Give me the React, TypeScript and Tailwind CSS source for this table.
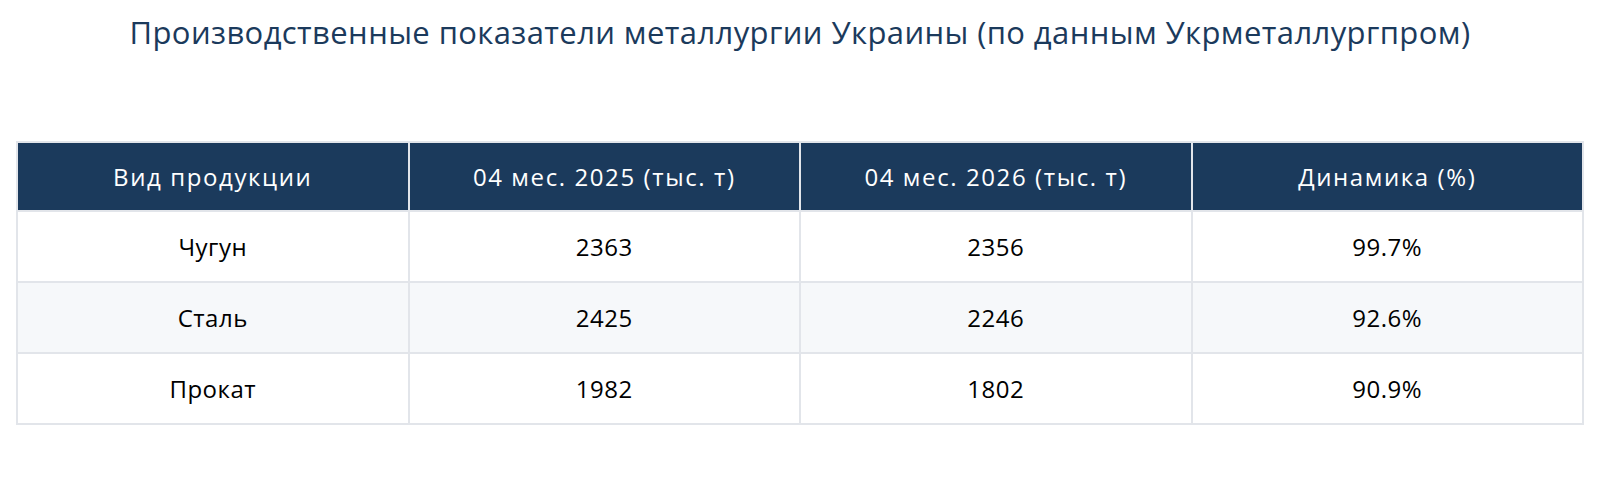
const rows = [
  { name: "Чугун", y2025: "2363", y2026: "2356", dyn: "99.7%" },
  { name: "Сталь", y2025: "2425", y2026: "2246", dyn: "92.6%" },
  { name: "Прокат", y2025: "1982", y2026: "1802", dyn: "90.9%" },
];

const headers = [
  "Вид продукции",
  "04 мес. 2025 (тыс. т)",
  "04 мес. 2026 (тыс. т)",
  "Динамика (%)",
];

export default function App() {
  return (
    <div
      className="bg-white px-4 pt-[10px] min-h-[495px]"
      style={{ fontFamily: "'Open Sans', 'Noto Sans', sans-serif" }}
    >
      <h1 className="text-center text-[31px] leading-[44px] tracking-[0.4px] text-[#1b3a5c] font-normal">
        Производственные показатели металлургии Украины (по данным Укрметаллургпром)
      </h1>

      <table className="mt-[87px] w-full table-fixed border-collapse border-2 border-[#e2e5ea] text-[24px]">
        <thead>
          <tr className="bg-[#1b3a5c] text-white">
            {headers.map((h) => (
              <th
                key={h}
                className="h-[69px] border-2 border-[#e2e5ea] font-normal text-center tracking-[1.6px]"
              >
                {h}
              </th>
            ))}
          </tr>
        </thead>
        <tbody>
          {rows.map((r, i) => (
            <tr
              key={r.name}
              className={i % 2 === 1 ? "bg-[#f6f8fa]" : "bg-white"}
            >
              {[r.name, r.y2025, r.y2026, r.dyn].map((v, j) => (
                <td
                  key={j}
                  className="h-[71px] border-2 border-[#e2e5ea] text-center text-black tracking-[0.5px]"
                >
                  {v}
                </td>
              ))}
            </tr>
          ))}
        </tbody>
      </table>
    </div>
  );
}
